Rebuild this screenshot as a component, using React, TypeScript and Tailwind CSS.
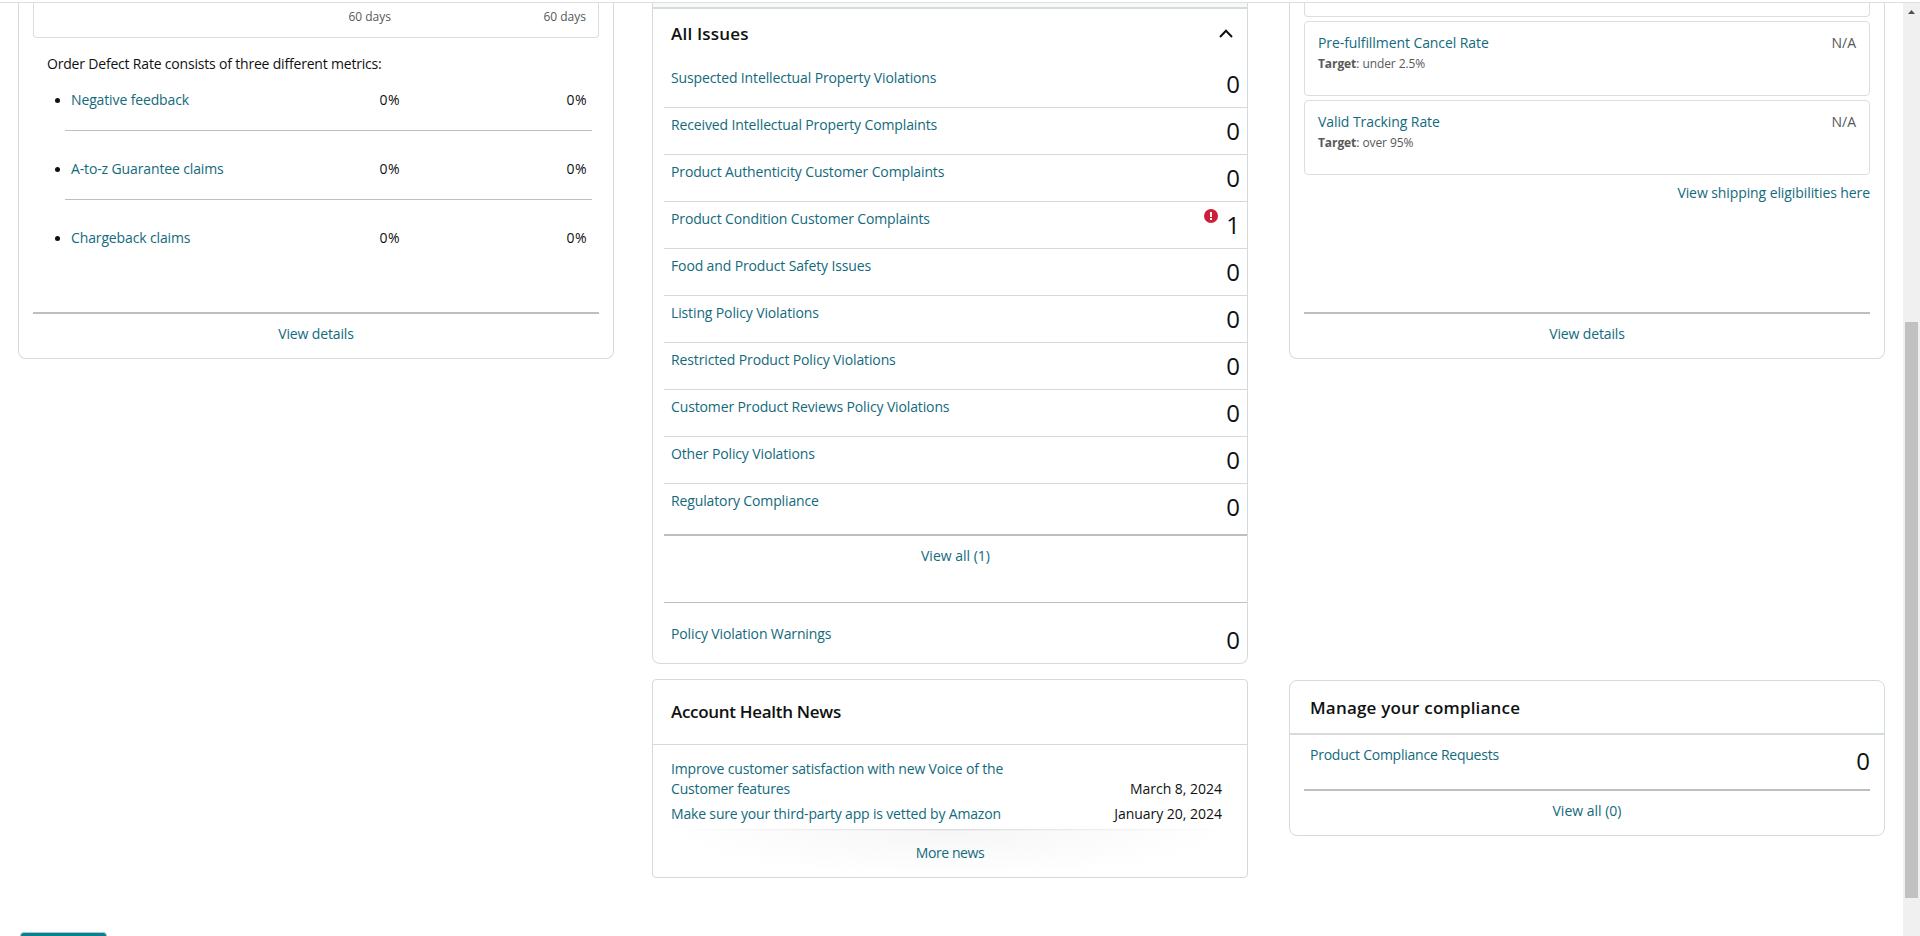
import { useState } from "react";

const DEFECT_METRICS = [
  { label: "Negative feedback", short: "0%", long: "0%" },
  { label: "A-to-z Guarantee claims", short: "0%", long: "0%" },
  { label: "Chargeback claims", short: "0%", long: "0%" },
];

const ISSUES = [
  { label: "Suspected Intellectual Property Violations", count: 0 },
  { label: "Received Intellectual Property Complaints", count: 0 },
  { label: "Product Authenticity Customer Complaints", count: 0 },
  { label: "Product Condition Customer Complaints", count: 1 },
  { label: "Food and Product Safety Issues", count: 0 },
  { label: "Listing Policy Violations", count: 0 },
  { label: "Restricted Product Policy Violations", count: 0 },
  { label: "Customer Product Reviews Policy Violations", count: 0 },
  { label: "Other Policy Violations", count: 0 },
  { label: "Regulatory Compliance", count: 0 },
];

const SHIPPING_RATES = [
  { label: "Pre-fulfillment Cancel Rate", target: "under 2.5%", value: "N/A" },
  { label: "Valid Tracking Rate", target: "over 95%", value: "N/A" },
];

const NEWS = [
  {
    title: "Improve customer satisfaction with new Voice of the Customer features",
    date: "March 8, 2024",
  },
  {
    title: "Make sure your third-party app is vetted by Amazon",
    date: "January 20, 2024",
  },
];

function Link({ children }: { children: React.ReactNode }) {
  return (
    <a href="#" className="text-[#126a7c] hover:underline">
      {children}
    </a>
  );
}

function AlertIcon() {
  return (
    <svg width="14" height="14" viewBox="0 0 14 14" className="mr-[8px]">
      <circle cx="7" cy="7" r="7" fill="#cc1f3a" />
      <rect x="6" y="3" width="2" height="5" fill="#fff" />
      <rect x="6" y="9" width="2" height="2" fill="#fff" />
    </svg>
  );
}

function Count({ value }: { value: number }) {
  return <span className="block pt-0.5 text-[24px] leading-7 tracking-normal text-[#0f1111]">{value}</span>;
}

function OrderDefectCard() {
  return (
    <section className="flex h-[356px] flex-col rounded-b-lg border border-t-0 border-[#d5dbdb] px-[14px]">
      <div className="flex h-[35px] shrink-0 rounded-b border border-t-0 border-[#dddfdf] pt-1 text-xs leading-5 tracking-normal text-[#565959]">
        <span className="w-[357px] text-right">60 days</span>
        <span className="w-[195px] text-right">60 days</span>
      </div>
      <p className="mt-4 ml-[14px] leading-5 tracking-[-0.19px]">
        Order Defect Rate consists of three different metrics:
      </p>
      <ul className="mt-4 mr-[7px] ml-8">
        {DEFECT_METRICS.map((metric) => (
          <li
            key={metric.label}
            className="relative mb-[28px] flex h-[41px] border-b border-[#bbbfbf] pl-[6px] leading-5 last:border-0"
          >
            <span className="absolute top-2 -left-[10px] size-[5px] rounded-full bg-[#0f1111]" />
            <span className="w-[292px]">
              <Link>{metric.label}</Link>
            </span>
            <span className="w-[37px] text-right tracking-[0.4px]">{metric.short}</span>
            <span className="w-[187px] text-right tracking-[0.4px]">{metric.long}</span>
          </li>
        ))}
      </ul>
      <div className="mt-auto h-[46px] shrink-0 border-t-2 border-[#bbbfbf] pt-[10px] text-center leading-5">
        <Link>View details</Link>
      </div>
    </section>
  );
}

function AllIssuesCard() {
  const [open, setOpen] = useState(true);

  return (
    <section className="rounded-b-lg border border-t-0 border-[#d5dbdb]">
      <div className="h-[6px] border-b-2 border-[#d5dbdb] bg-[#f7f8f8]" />
      <button
        type="button"
        onClick={() => setOpen(!open)}
        className="flex h-[52px] w-full items-center justify-between pr-[14px] pb-[3px] pl-[18px]"
      >
        <h2 className="text-[17px] leading-6 font-semibold tracking-[0.2px]">All Issues</h2>
        <svg width="14" height="9" viewBox="0 0 14 9" fill="none" stroke="#0f1111" strokeWidth="2">
          <path d="M1 8 7 1.8 13 8" />
        </svg>
      </button>
      {open && (
        <ul className="ml-[11px]">
          {ISSUES.map((issue) => (
            <li
              key={issue.label}
              className="flex h-[47px] border-b border-[#d5d9d9] pt-[7px] pr-[7px] pl-[7px] leading-5 last:h-[52px] last:border-b-2 last:border-[#bbbfbf]"
            >
              <span className="grow">
                <Link>{issue.label}</Link>
              </span>
              {issue.count > 0 && <AlertIcon />}
              <Count value={issue.count} />
            </li>
          ))}
        </ul>
      )}
      <div className="ml-[11px] h-[67px] border-b border-[#bbbfbf] pt-[10px] text-center leading-5 tracking-normal">
        <Link>View all (1)</Link>
      </div>
      <div className="flex h-[60px] justify-between pt-[21px] pr-[7px] pl-[18px] leading-5">
        <Link>Policy Violation Warnings</Link>
        <Count value={0} />
      </div>
    </section>
  );
}

function NewsCard() {
  return (
    <section className="mt-[15px] h-[199px] rounded border border-[#d5d9d9]">
      <div className="flex h-[65px] items-center border-b border-[#d5d9d9] px-[18px]">
        <h2 className="text-[17px] leading-6 font-semibold tracking-[-0.3px]">Account Health News</h2>
      </div>
      <ul className="flex h-[84px] flex-col gap-[5px] pt-[14px] pr-[25px] pl-[18px] leading-5 tracking-[-0.17px]">
        {NEWS.map((item) => (
          <li key={item.title} className="flex items-end justify-between">
            <span className="w-[345px]">
              <Link>{item.title}</Link>
            </span>
            <span className="tracking-[-0.02px]">{item.date}</span>
          </li>
        ))}
      </ul>
      <div className="mx-[18px] h-[48px] bg-[radial-gradient(ellipse_50%_100%_at_50%_0%,#f6f6f6,#ffffff)]">
        <div className="h-px bg-[linear-gradient(90deg,#fff,#dcdcdc_50%,#fff)]" />
        <div className="h-px bg-[linear-gradient(90deg,#fff,#ececec_50%,#fff)]" />
        <div className="pt-3 text-center leading-5 tracking-[-0.4px]">
          <Link>More news</Link>
        </div>
      </div>
    </section>
  );
}

function ShippingCard() {
  return (
    <section className="flex h-[356px] flex-col rounded-b-lg border border-t-0 border-[#d5dbdb] px-[14px]">
      <div className="h-[14px] shrink-0 rounded-b border border-t-0 border-[#dddfdf]" />
      {SHIPPING_RATES.map((rate) => (
        <div
          key={rate.label}
          className="mt-1 flex h-[75px] shrink-0 justify-between rounded border border-[#dddfdf] px-[13px] pt-[11px]"
        >
          <div>
            <div className="leading-5 tracking-[-0.08px]">
              <Link>{rate.label}</Link>
            </div>
            <div className="pt-px text-xs leading-5 tracking-[-0.08px] text-[#565959]">
              <span className="font-bold">Target</span>: {rate.target}
            </div>
          </div>
          <span className="leading-5 tracking-normal text-[#565959]">{rate.value}</span>
        </div>
      ))}
      <div className="mt-2 text-right leading-5 tracking-[-0.09px]">
        <Link>View shipping eligibilities here</Link>
      </div>
      <div className="mt-auto h-[46px] shrink-0 border-t-2 border-[#bbbfbf] pt-[10px] text-center leading-5">
        <Link>View details</Link>
      </div>
    </section>
  );
}

function ComplianceCard() {
  return (
    <section className="mt-[321px] h-[156px] rounded-lg border border-[#d5dbdb]">
      <div className="flex h-[54px] items-center border-b-2 border-[#d5dbdb] px-5 pt-0.5">
        <h2 className="text-[17px] leading-6 font-semibold tracking-[0.2px]">Manage your compliance</h2>
      </div>
      <div className="mx-[14px] flex h-[56px] justify-between border-b-2 border-[#bbbfbf] pt-[10px] pl-[6px] leading-5">
        <span className="tracking-[-0.24px]">
          <Link>Product Compliance Requests</Link>
        </span>
        <Count value={0} />
      </div>
      <div className="pt-[10px] text-center leading-5 tracking-normal">
        <Link>View all (0)</Link>
      </div>
    </section>
  );
}

export default function App() {
  return (
    <div className="flex h-[936px] w-[1920px] flex-col overflow-hidden bg-white font-['Open_Sans',sans-serif] text-sm tracking-[-0.13px] text-[#0f1111]">
      <div className="h-[3px] shrink-0 border-b border-[#dddfdf]" />
      <div className="flex grow">
        <div className="ml-[18px] flex w-[596px] flex-col">
          <OrderDefectCard />
          <div className="mt-auto ml-[2px] h-1 w-[87px] rounded-t border border-b-0 border-[#b5c4c6] bg-[#008296]" />
        </div>
        <div className="ml-[38px] w-[596px]">
          <AllIssuesCard />
          <NewsCard />
        </div>
        <div className="ml-[41px] w-[596px]">
          <ShippingCard />
          <ComplianceCard />
        </div>
        <div className="ml-[18px] flex w-[17px] flex-col items-center bg-[#f0f0f0]">
          <svg width="7" height="4" viewBox="0 0 7 4" className="mt-[7px] shrink-0">
            <path d="M0 4 3.5 0 7 4Z" fill="#505050" />
          </svg>
          <div className="mt-[308px] h-[576px] w-[13px] bg-[#c1c1c1]" />
        </div>
      </div>
    </div>
  );
}
